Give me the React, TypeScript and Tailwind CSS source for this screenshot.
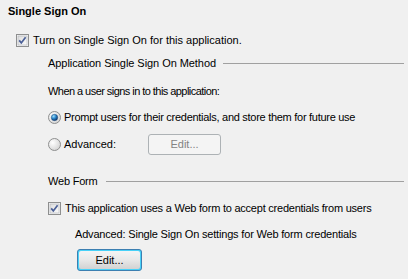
import React from 'react';

function CheckBox() {
  return (
    <svg width="13" height="13" viewBox="0 0 13 13" className="shrink-0">
      <defs>
        <linearGradient id="cbg" x1="0" y1="0" x2="1" y2="1">
          <stop offset="0" stopColor="#dcdcdc" />
          <stop offset="1" stopColor="#fbfbfb" />
        </linearGradient>
      </defs>
      <rect x="0.5" y="0.5" width="12" height="12" fill="#f4f4f4" stroke="#8e8f8f" />
      <rect x="2" y="2" width="9" height="9" fill="url(#cbg)" stroke="#aeb3b9" strokeWidth="0.6" />
      <path d="M3.2 6.4 L5.3 8.9 L9.6 3.2" fill="none" stroke="#4a5f97" strokeWidth="1.7" />
    </svg>
  );
}

function Radio({ on }: { on?: boolean }) {
  return (
    <svg width="13" height="13" viewBox="0 0 13 13" className="shrink-0">
      <defs>
        <radialGradient id="rbg" cx="0.35" cy="0.35" r="0.7">
          <stop offset="0" stopColor="#ffffff" />
          <stop offset="1" stopColor="#d4d4d4" />
        </radialGradient>
        <radialGradient id="rdot" cx="0.35" cy="0.3" r="0.7">
          <stop offset="0" stopColor="#a5e1f8" />
          <stop offset="0.5" stopColor="#2d8bd0" />
          <stop offset="1" stopColor="#10376b" />
        </radialGradient>
      </defs>
      <circle cx="6.5" cy="6.5" r="6" fill="url(#rbg)" stroke="#8e8f8f" />
      {on && <circle cx="6.5" cy="6.5" r="3.2" fill="url(#rdot)" stroke="#1d4a7d" strokeWidth="0.5" />}
    </svg>
  );
}

export default function App() {
  return (
    <div
      className="w-[408px] h-[279px] bg-[#f0f0f0] text-[11px] text-black overflow-hidden flex flex-col"
      style={{ fontFamily: '"Liberation Sans", Arial, sans-serif' }}
    >
      <div className="h-[22px] pl-[8px] flex items-center font-bold text-[11px]">Single Sign On</div>

      <div className="mt-[7px] h-[22px] pl-[16px] flex items-center gap-[4px]">
        <CheckBox />
        <span>Turn on Single Sign On for this application.</span>
      </div>

      <div className="mt-[1px] h-[22px] pl-[48px] pr-[4px] flex items-center gap-[7px]">
        <span className="tracking-[-0.06px]">Application Single Sign On Method</span>
        <div className="flex-1 h-[1px] bg-[#a0a0a0]" />
      </div>

      <div className="mt-[6px] h-[22px] pl-[48px] flex items-center tracking-[-0.55px]">
        When a user signs in to this application:
      </div>

      <div className="mt-[4px] h-[22px] pl-[48px] flex items-center gap-[3px]">
        <Radio on />
        <span className="tracking-[-0.28px]">Prompt users for their credentials, and store them for future use</span>
      </div>

      <div className="mt-[6px] h-[21px] pl-[48px] flex items-center gap-[3px]">
        <Radio />
        <span className="w-[81px]">Advanced:</span>
        <div className="w-[73px] h-[21px] border border-[#adb2b5] rounded-[3px] bg-[#f4f4f4] text-[#838383] flex items-center justify-center">
          Edit...
        </div>
      </div>

      <div className="mt-[15px] h-[22px] pl-[48px] pr-[4px] flex items-center gap-[8px]">
        <span className="tracking-[-0.2px]">Web Form</span>
        <div className="flex-1 h-[1px] bg-[#a0a0a0]" />
      </div>

      <div className="mt-[5px] h-[22px] pl-[48px] flex items-center gap-[4px]">
        <CheckBox />
        <span className="tracking-[-0.23px]">This application uses a Web form to accept credentials from users</span>
      </div>

      <div className="mt-[4px] h-[22px] pl-[75px] flex items-center tracking-[-0.18px]">
        Advanced: Single Sign On settings for Web form credentials
      </div>

      <div className="mt-[4px] pl-[77px] flex">
        <div className="w-[65px] h-[22px] border border-[#3c7fb1] rounded-[3px] p-[1px] bg-[#48d1f8]">
          <div className="w-full h-full rounded-[2px] bg-gradient-to-b from-[#f4f4f4] via-[#e8e8e8] to-[#d2d2d2] flex items-center justify-center">
            Edit...
          </div>
        </div>
      </div>
    </div>
  );
}
